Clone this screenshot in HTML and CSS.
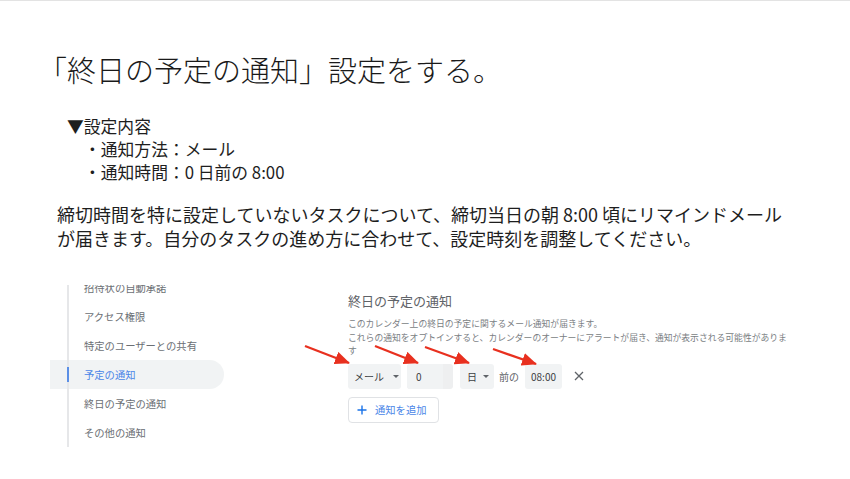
FILE: index.html
```html
<!DOCTYPE html>
<html lang="ja">
<head>
<meta charset="utf-8">
<link rel="stylesheet" href="styles.css">
</head>
<body>
<div class="slide">
  <h1 class="title">「終日の予定の通知」設定をする。</h1>
  <div class="spec">
    <div class="spec-head">▼設定内容</div>
    <div class="spec-item">・通知方法：メール</div>
    <div class="spec-item">・通知時間：0 日前の 8:00</div>
  </div>
  <p class="note">締切時間を特に設定していないタスクについて、締切当日の朝 8:00 頃にリマインドメール<br>が届きます。自分のタスクの進め方に合わせて、設定時刻を調整してください。</p>
  <div class="shot">
    <nav class="nav">
      <div class="nav-item">招待状の自動承諾</div>
      <div class="nav-item">アクセス権限</div>
      <div class="nav-item">特定のユーザーとの共有</div>
      <div class="nav-item active">予定の通知</div>
      <div class="nav-item">終日の予定の通知</div>
      <div class="nav-item">その他の通知</div>
    </nav>
    <section class="panel">
      <h2 class="panel-title">終日の予定の通知</h2>
      <p class="panel-desc">このカレンダー上の終日の予定に関するメール通知が届きます。<br>これらの通知をオプトインすると、カレンダーのオーナーにアラートが届き、通知が表示される可能性がありま<br>す</p>
      <div class="row">
        <div class="box sel sel-mail">メール<span class="caret"></span></div>
        <div class="box num"><span class="num-inner">0</span></div>
        <div class="box sel sel-day">日<span class="caret"></span></div>
        <span class="before">前の</span>
        <div class="box time">08:00</div>
        <svg class="close" width="10" height="10" viewBox="0 0 10 10"><path d="M1 1 L9 9 M9 1 L1 9" stroke="#5f6368" stroke-width="1.3" fill="none"/></svg>
      </div>
      <div class="add">
        <svg class="plus" width="10" height="10" viewBox="0 0 10 10"><path d="M5 0.5 V9.5 M0.5 5 H9.5" stroke="#1a73e8" stroke-width="1.4" fill="none"/></svg>
        <span>通知を追加</span>
      </div>
    </section>
    <svg class="arrows" width="500" height="100" viewBox="0 0 500 100">
      <defs>
        <marker id="ah" markerWidth="15" markerHeight="13" refX="14" refY="6.5" orient="auto" markerUnits="userSpaceOnUse">
          <path d="M0,0 L15,6.5 L0,13 z" fill="#e8301f"/>
        </marker>
      </defs>
      <g stroke="#e8301f" stroke-width="2.3" marker-end="url(#ah)">
        <line x1="255" y1="61" x2="299" y2="78"/>
        <line x1="325" y1="61" x2="368" y2="78"/>
        <line x1="375" y1="62" x2="419" y2="78"/>
        <line x1="443" y1="64" x2="486" y2="79"/>
      </g>
    </svg>
  </div>
</div>
</body>
</html>
```
FILE: styles.css
```css
html, body {
  margin: 0;
  padding: 0;
  background: #fff;
}
body {
  width: 850px;
  height: 479px;
  overflow: hidden;
  border-top: 1px solid #e3e3e3;
  box-sizing: border-box;
  font-family: "Noto Sans CJK JP", "Noto Sans", sans-serif;
  color: #1e1e1e;
}
.slide {
  display: flex;
  flex-direction: column;
}
.title {
  margin: 48px 0 0 38px;
  font-size: 29px;
  line-height: 40px;
  font-weight: 300;
  color: #1a1a1a;
}
.spec {
  margin: 26px 0 0 67px;
  font-size: 16.8px;
  line-height: 23px;
}
.spec-item {
  padding-left: 17px;
}
.note {
  margin: 18px 0 0 57px;
  font-size: 18px;
  line-height: 24px;
}
.shot {
  position: relative;
  margin: 35px 0 0 50px;
  height: 165px;
  overflow: hidden;
  display: flex;
}
.nav {
  width: 174px;
  margin-top: -12px;
  display: flex;
  flex-direction: column;
}
.nav-item {
  height: 29px;
  line-height: 29px;
  padding-left: 34px;
  font-size: 10.3px;
  color: #6b6f74;
  background: linear-gradient(to right, transparent 17px, #e6e7e9 17px, #e6e7e9 19px, transparent 19px) no-repeat;
}
.nav-item.active {
  color: #4a86e8;
  border-radius: 0 15px 15px 0;
  background:
    linear-gradient(to right, transparent 17px, #5b8fe6 17px, #5b8fe6 19px, transparent 19px) 0 7px / 100% 15px no-repeat,
    linear-gradient(to right, transparent 17px, #e6e7e9 17px, #e6e7e9 19px, transparent 19px) no-repeat,
    #f1f3f4;
}
.panel {
  margin-left: 124px;
  padding-top: 7px;
  display: flex;
  flex-direction: column;
  align-items: flex-start;
}
.panel-title {
  margin: 0;
  font-size: 13px;
  line-height: 18px;
  font-weight: 400;
  color: #5f6368;
}
.panel-desc {
  margin: 7px 0 0 0;
  width: 470px;
  font-size: 8.8px;
  line-height: 13.5px;
  color: #7a7e83;
}
.row {
  margin-top: 6px;
  display: flex;
  align-items: center;
  height: 25px;
  font-size: 10px;
  color: #3c4043;
}
.box {
  height: 25px;
  background: #f1f3f4;
  border-radius: 3px;
  display: flex;
  align-items: center;
  box-sizing: border-box;
}
.sel-mail {
  width: 53px;
  padding-left: 6px;
}
.sel-mail .caret {
  margin-left: 9px;
}
.caret {
  width: 0;
  height: 0;
  border-left: 3px solid transparent;
  border-right: 3px solid transparent;
  border-top: 3px solid #5f6368;
}
.num {
  width: 46px;
  margin-left: 6px;
  background: #eeeff0;
}
.num-inner {
  height: 25px;
  line-height: 25px;
  width: 36px;
  padding-left: 9px;
  box-sizing: border-box;
  background: #f1f3f4;
  border-radius: 3px 0 0 3px;
}
.sel-day {
  width: 34px;
  margin-left: 7px;
  padding-left: 7px;
}
.sel-day .caret {
  margin-left: 6px;
}
.before {
  margin-left: 5px;
  color: #5f6368;
}
.time {
  width: 37px;
  margin-left: 6px;
  justify-content: center;
}
.close {
  margin-left: 12px;
}
.add {
  margin-top: 8px;
  height: 26px;
  width: 91px;
  box-sizing: border-box;
  border: 1px solid #e0e2e5;
  border-radius: 4px;
  display: flex;
  align-items: center;
  padding-left: 8px;
  gap: 8px;
  font-size: 10.3px;
  color: #4a86e8;
}
.arrows {
  position: absolute;
  left: 0;
  top: 0;
}
```
